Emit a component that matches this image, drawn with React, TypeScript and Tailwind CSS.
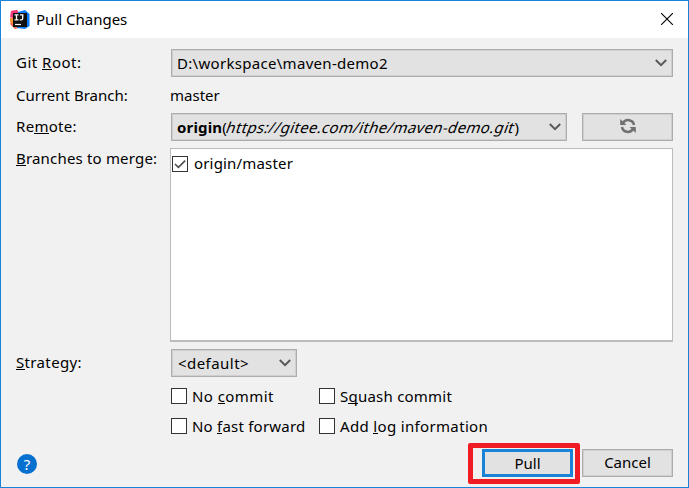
import type { ReactNode } from "react";

function Chevron() {
  return (
    <svg width="12" height="8" viewBox="0 0 12 8" fill="none" className="mt-[-1px] shrink-0">
      <path d="M0.800 1 L6 6.200 L11.200 1" stroke="#595959" strokeWidth="2" />
    </svg>
  );
}

function Combo({ className, children }: { className: string; children: ReactNode }) {
  return (
    <div
      className={`flex h-7 items-center justify-between border border-[#adadad] bg-[#e2e2e2] pr-[5px] pl-[5px] shadow-[inset_0_0_0_1px_#cfcfcf] ${className}`}
    >
      {children}
      <Chevron />
    </div>
  );
}

function Box({ checked = false }: { checked?: boolean }) {
  return (
    <span className="flex h-4 w-4 shrink-0 items-center justify-center border border-[#333333] bg-white">
      {checked && (
        <svg width="14" height="14" viewBox="0 0 14 14" fill="none" className="shrink-0">
          <path d="M2 7 L5.4 10.4 L12.2 3.6" stroke="#4a4a4a" strokeWidth="1.5" />
        </svg>
      )}
    </span>
  );
}

function Key({ children }: { children: ReactNode }) {
  return <span className="inline-block h-[18px] border-b border-black leading-[21px]">{children}</span>;
}

function AppLogo() {
  return (
    <svg width="20" height="20" viewBox="0 0 20 20" className="shrink-0">
      <path d="M1 1 L7 0 L10 4 L8 18 L5 19 L0 14 L2 10 Z" fill="#fc6045" />
      <path d="M1 1 L7 0 L9 4 L3 8 L0 7 Z" fill="#f6387b" />
      <path d="M0 8 L3 8 L3 14 L0 12 Z" fill="#fb9335" />
      <path d="M8 2 L15 0 L19.500 4 L19.500 16 L15 19 L7 18 Z" fill="#087cfa" />
      <rect x="3" y="3" width="14" height="14" fill="#111111" />
      <path d="M4.500 4.800 H8.500 M6.500 4.800 V9.800 M4.500 9.800 H8.500 M10 4.800 H13.500 M12.700 4.800 V8.500 Q12.700 9.800 11.400 9.800 H9.800" stroke="#ffffff" strokeWidth="1.300" fill="none" />
      <path d="M5 14.500 H11" stroke="#ffffff" strokeWidth="1.200" />
    </svg>
  );
}

function RefreshIcon() {
  return (
    <svg width="16" height="16" viewBox="0 0 16 16" fill="none" className="mt-[-2px]">
      <path d="M3 5.200 A5.900 5.900 0 0 1 14 7" stroke="#707070" strokeWidth="2.500" />
      <path d="M0.200 1 V7 H6.400 Z" fill="#707070" />
      <path d="M13 10.800 A5.900 5.900 0 0 1 2 9" stroke="#707070" strokeWidth="2.500" />
      <path d="M15.800 15 V9 H9.600 Z" fill="#707070" />
    </svg>
  );
}

export default function App() {
  return (
    <div className="flex h-[488px] w-[689px] flex-col border border-[#1883d7] bg-[#f1f1f1] font-['Noto_Sans','Open_Sans',sans-serif] text-[15px] leading-5 whitespace-nowrap text-black">
      <header className="flex h-[37px] shrink-0 items-center bg-white pr-[15px] pl-[9px]">
        <AppLogo />
        <h1 className="mt-[-2px] ml-[6px] grow">Pull Changes</h1>
        <svg width="12" height="12" viewBox="0 0 12 12" fill="none" className="mt-[-1px]">
          <path d="M0 0 L12 12 M12 0 L0 12" stroke="#000000" strokeWidth="1.100" />
        </svg>
      </header>

      <main className="flex grow flex-col pt-[11px] pr-[15px] pl-[15px]">
        <div className="flex h-7 items-center">
          <div className="mt-[-2px] w-[155px] tracking-[0.5px]">Git <Key>R</Key>oot:</div>
          <Combo className="w-[502px]"><span className="tracking-[0.3px]">D:\workspace\maven-demo2</span></Combo>
        </div>
        <div className="flex h-9 items-center">
          <div className="w-[154px]">Current Branch:</div>
          <div>master</div>
        </div>
        <div className="flex h-7 items-center">
          <div className="mt-[-2px] w-[155px] tracking-[0.3px]">Re<Key>m</Key>ote:</div>
          <Combo className="w-[396px]">
            <span>
              <b className="tracking-[0.15px]">origin</b>(<span className="inline-block -skew-x-[20deg] tracking-[0.33px]">https://gitee.com/ithe/maven-demo.git</span>)
            </span>
          </Combo>
          <button className="ml-[15px] flex h-7 w-[91px] items-center justify-center border border-[#adadad] bg-[#e2e2e2] shadow-[inset_0_0_0_1px_#cfcfcf]">
            <RefreshIcon />
          </button>
        </div>
        <div className="mt-[7px] flex h-[194px]">
          <div className="w-[154px] tracking-[0.18px]"><Key>B</Key>ranches to merge:</div>
          <div className="h-full w-[503px] border border-b-2 border-[#bcbcbc] bg-white pt-[6px] pl-[1px]">
            <div className="flex h-[18px] items-center gap-[6px]">
              <Box checked />
              <span className="mt-[-2px] tracking-[0.17px]">origin/master</span>
            </div>
          </div>
        </div>
        <div className="mt-[7px] flex h-7 items-center">
          <div className="mt-[-2px] w-[155px] tracking-[0.35px]"><Key>S</Key>trategy:</div>
          <Combo className="w-[126px]"><span className="pl-px tracking-[0.45px]">&lt;default&gt;</span></Combo>
        </div>
        <div className="mt-[4px] ml-[155px] grid w-[360px] grid-cols-[148px_1fr]">
          <label className="flex h-[30px] items-center gap-[5px]"><Box /><span className="tracking-[0.42px]">No <Key>c</Key>ommit</span></label>
          <label className="flex h-[30px] items-center gap-[5px]"><Box /><span className="tracking-[0.23px]">S<Key>q</Key>uash commit</span></label>
          <label className="flex h-[30px] items-center gap-[5px]"><Box /><span className="tracking-[0.22px]">No <Key>f</Key>ast forward</span></label>
          <label className="flex h-[30px] items-center gap-[5px]"><Box /><span className="tracking-[0.34px]">Add <Key>l</Key>og information</span></label>
        </div>
        <div className="mt-[2px] flex h-[41px] items-start">
          <button className="mt-[11px] ml-px flex h-5 w-5 items-center justify-center rounded-full bg-[#0670d1] text-[15px] leading-5 text-white">?</button>
          <div className="ml-[431px] flex h-[41px] w-[112px] items-start rounded-[2px] border-[5px] border-[#f01c24] pt-px pl-[9px]">
            <button className="h-7 w-[91px] shrink-0 border-[3px] border-[#1883d7] bg-[#e2e2e2] pb-px leading-5">Pull</button>
          </div>
          <button className="mt-[6px] ml-[2px] h-7 w-[91px] border border-[#adadad] bg-[#e2e2e2] pb-[2px] leading-5 shadow-[inset_0_0_0_1px_#cfcfcf]">Cancel</button>
        </div>
      </main>
    </div>
  );
}
